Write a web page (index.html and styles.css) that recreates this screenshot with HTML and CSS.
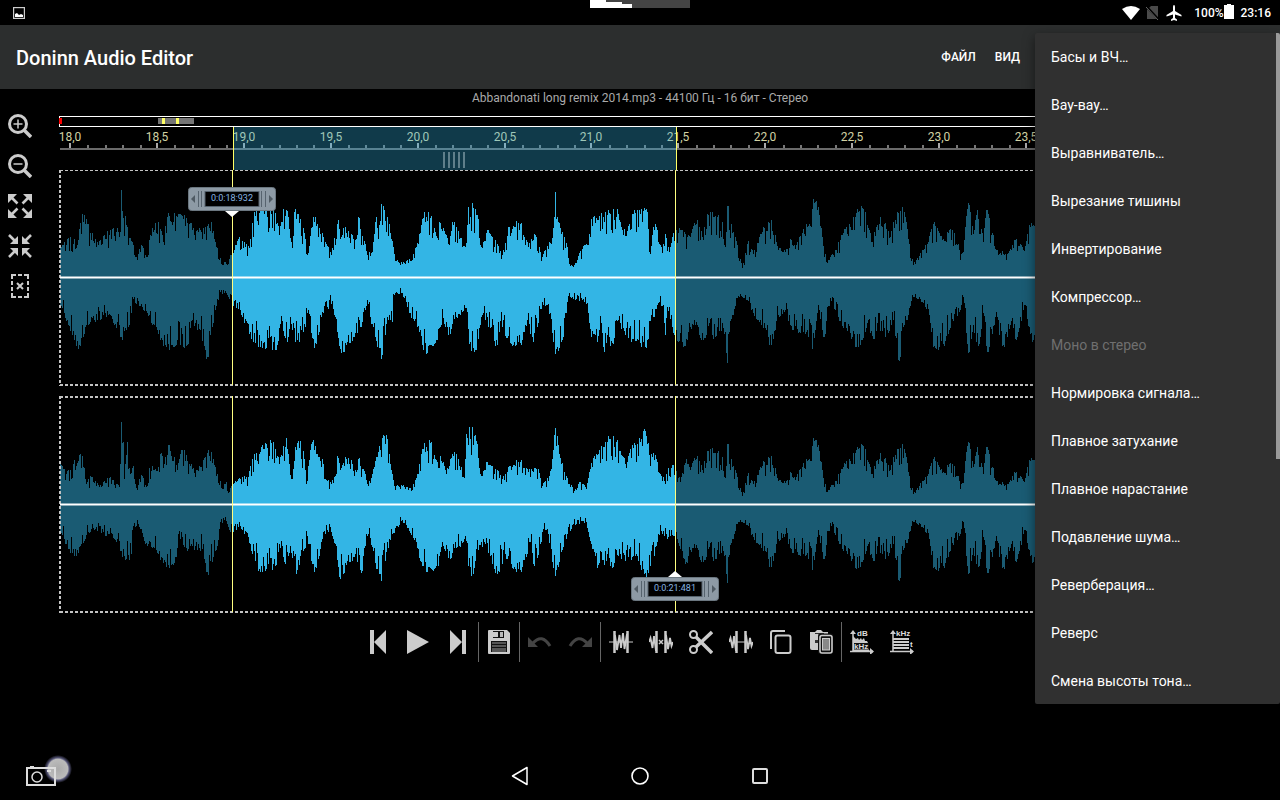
FILE: index.html
```html
<!DOCTYPE html>
<html lang="ru">
<head>
<meta charset="utf-8">
<meta name="viewport" content="width=device-width, initial-scale=1">
<title>Doninn Audio Editor</title>
<link rel="stylesheet" href="styles.css">
</head>
<body>
<div class="statusbar">
  <svg class="icon-note" width="12" height="12" viewBox="0 0 12 12"><rect x=".6" y=".6" width="10.8" height="10.8" fill="none" stroke="#ccc" stroke-width="1.2"/><path d="M2 10V7l2-1 2 2 2-1 2 1v2z" fill="#fff"/></svg>
  <svg class="cutout" width="100" height="8" viewBox="0 0 100 8"><path d="M0 0h100v8H0z" fill="#444"/><path d="M0 0h16v2h16v2h10v4H0z" fill="#fff"/></svg>
  <div class="status-icons">
    <svg width="18" height="14" viewBox="0 0 18 14"><path d="M9 14 0 3Q9-3 18 3z" fill="#fff"/></svg>
    <svg width="14" height="16" viewBox="0 0 14 16"><path d="M5 1h7v13H1V5z" fill="#4a4a4a"/><path d="M0 1l13 14" stroke="#000" stroke-width="2.500"/><path d="M0 2l12 13" stroke="#666" stroke-width="1"/></svg>
    <svg width="16" height="16" viewBox="0 0 16 16"><path d="M8 0q1 0 1 2v4l6.500 4v1.500L9 9.500V13l2 1.500V16l-3-1-3 1v-1.500L7 13V9.500L.5 11.500V10L7 6V2q0-2 1-2z" fill="#fff"/></svg>
  </div>
  <span class="battery">100%<svg width="10" height="15" viewBox="0 0 10 15"><path d="M3 0h4v1h3v14H0V1h3z" fill="#fff"/></svg></span>
  <time class="clock">23:16</time>
</div>

<header class="appbar">
  <h1 class="app-title">Doninn Audio Editor</h1>
  <button class="appbar-action">ФАЙЛ</button>
  <button class="appbar-action">ВИД</button>
</header>

<main class="workspace">
  <p class="file-info">Abbandonati long remix 2014.mp3 - 44100 Гц - 16 бит - Стерео</p>
  <div class="editor">
    <div class="zoom-tools">
      <button class="tool" aria-label="Увеличить"><svg width="24" height="24" viewBox="0 0 24 24"><circle cx="10" cy="10" r="8.500" fill="none" stroke="#ccc" stroke-width="3"/><path d="M16 16l7 7" stroke="#ccc" stroke-width="3.500"/><path d="M10 5.500v9M5.500 10h9" stroke="#ccc" stroke-width="1.500"/></svg></button>
      <button class="tool" aria-label="Уменьшить"><svg width="24" height="24" viewBox="0 0 24 24"><circle cx="10" cy="10" r="8.500" fill="none" stroke="#ccc" stroke-width="3"/><path d="M16 16l7 7" stroke="#ccc" stroke-width="3.500"/><path d="M5.500 10h9" stroke="#ccc" stroke-width="1.500"/></svg></button>
      <button class="tool" aria-label="Показать всё"><svg width="24" height="24" viewBox="0 0 24 24" fill="#ccc" stroke="#ccc"><path stroke="none" d="M0 0h9L0 9zM24 0v9L15 0zM0 24v-9l9 9zM24 24h-9l9-9z"/><path stroke-width="2.600" d="M3 3l6.500 6.500M21 3l-6.500 6.500M3 21l6.500-6.500M21 21l-6.500-6.500"/></svg></button>
      <button class="tool" aria-label="По выделению"><svg width="24" height="24" viewBox="0 0 24 24" fill="#ccc" stroke="#ccc"><path stroke="none" d="M10 10H2l8-8zM14 10V2l8 8zM10 14v8l-8-8zM14 14h8l-8 8z"/><path stroke-width="2.600" d="M1 1l7 7M23 1l-7 7M1 23l7-7M23 23l-7-7"/></svg></button>
      <button class="tool" aria-label="Снять выделение"><svg width="24" height="24" viewBox="0 0 24 24" fill="none" stroke="#ccc" stroke-width="2"><path d="M4 5V1h4M16 1h4v4M20 19v4h-4M8 23H4v-4M10 1h4M10 23h4M4 7v4M4 13v4M20 7v4M20 13v4"/><path d="M9 9l6 6M15 9l-6 6"/></svg></button>
    </div>
    <div class="tracks">
      <svg class="overview" width="100%" height="11"><path d="M0 .5h3000M0 10.500h3000M.5 0v11" stroke="#fff" fill="none"/><path d="M0 2h3v6H0z" fill="red"/><path d="M99 2h36v6H99z" fill="#757575"/><path d="M103 2h3v6h-3zM117 2h3v6h-3z" fill="#ffff66"/></svg>
      <svg class="ruler" id="ruler" width="100%" height="43"></svg>
      <div class="lane lane-left">
        <svg class="wave" id="wave-left" width="100%" height="216"></svg>
        <div class="marker marker-start"><svg width="88" height="30" viewBox="0 0 88 30"><use href="#marker-body"/><path d="M37 24h14l-7 6z" fill="#fff"/></svg><span class="marker-time">0:0:18:932</span></div>
      </div>
      <div class="lane lane-right">
        <svg class="wave" id="wave-right" width="100%" height="217"></svg>
        <div class="marker marker-end"><svg width="88" height="30" viewBox="0 0 88 30"><g transform="translate(0 6)"><use href="#marker-body"/></g><path d="M37 6h14l-7-6z" fill="#fff"/></svg><span class="marker-time">0:0:21:481</span></div>
      </div>
    </div>
  </div>

  <div class="toolbar">
    <button class="tool" aria-label="В начало"><svg width="24" height="24" viewBox="0 0 24 24" fill="#ccc"><path d="M4 0h4v24H4zM20 0v24L8 12z"/></svg></button>
    <button class="tool" aria-label="Воспроизвести"><svg width="24" height="24" viewBox="0 0 24 24" fill="#ccc"><path d="M1 0l22 12L1 24z"/></svg></button>
    <button class="tool" aria-label="В конец"><svg width="24" height="24" viewBox="0 0 24 24" fill="#ccc"><path d="M16 0h4v24h-4zM4 0l12 12L4 24z"/></svg></button>
    <span class="divider"></span>
    <button class="tool" aria-label="Сохранить"><svg width="24" height="24" viewBox="0 0 24 24"><path d="M2 0h18l3 3v20q0 1-1 1H2q-1 0-1-1V1q0-1 1-1z" fill="#ccc"/><path d="M6 1h11v7H6zM4 11h16v11H4z" fill="#111"/><path d="M6 2h5v5H6z" fill="#ccc"/><path d="M13 2h3v5h-3z" fill="#bbb"/><path d="M5 13h14M5 16h14M5 19h14M5 21h14" stroke="#999" stroke-width="1.200"/></svg></button>
    <span class="divider"></span>
    <button class="tool" aria-label="Отменить" disabled><svg width="24" height="24" viewBox="0 0 24 24"><path d="M0 7v10h10z" fill="#444"/><path d="M5 13q9-10 17 3" fill="none" stroke="#444" stroke-width="3"/></svg></button>
    <button class="tool" aria-label="Повторить" disabled><svg width="24" height="24" viewBox="0 0 24 24"><path d="M24 7v10H14z" fill="#444"/><path d="M19 13q-9-10-17 3" fill="none" stroke="#444" stroke-width="3"/></svg></button>
    <span class="divider"></span>
    <button class="tool" aria-label="Выделить всё"><svg width="24" height="24" viewBox="0 0 24 24" fill="none" stroke="#ccc"><path d="M0 12h24" stroke-width="1"/><path d="M5.500 1v22M18.500 1v22" stroke-width="2.500"/><path d="M6 5l2 15 2.500-15L12 18l2-15 1.500 16L18 4" stroke-width="1.800"/></svg></button>
    <button class="tool" aria-label="Удалить"><svg width="24" height="24" viewBox="0 0 24 24" fill="none" stroke="#ccc"><path d="M7.500 1v22M16.500 1v22" stroke-width="2.500"/><path d="M0 12l1.500-4 2 10L5 6l2 15M17 5l2 14 2-11 1.500 8L24 12" stroke-width="1.800"/><path d="M10 10l4 4M14 10l-4 4" stroke-width="1.500"/></svg></button>
    <button class="tool" aria-label="Вырезать"><svg width="24" height="24" viewBox="0 0 24 24" fill="none" stroke="#ccc"><circle cx="4.500" cy="4.500" r="3.500" stroke-width="2"/><circle cx="4.500" cy="19.500" r="3.500" stroke-width="2"/><path d="M7 7l16 16M7 17L23 2" stroke-width="3.500"/></svg></button>
    <button class="tool" aria-label="Обрезать"><svg width="24" height="24" viewBox="0 0 24 24" fill="none" stroke="#ccc"><path d="M7.500 1v22M16.500 1v22" stroke-width="2.500"/><path d="M0 12l1.500-4 2 10L5 6l2 15M17 5l2 14 2-11 1.500 8L24 12" stroke-width="1.800"/><path d="M8 12h8"/></svg></button>
    <button class="tool" aria-label="Копировать"><svg width="24" height="24" viewBox="0 0 24 24" fill="none" stroke="#ccc" stroke-width="2"><path d="M2 19V3q0-2 2-2h12"/><rect x="6.500" y="5.500" width="15" height="17.500" rx="2"/></svg></button>
    <button class="tool" aria-label="Вставить"><svg width="24" height="24" viewBox="0 0 24 24"><path d="M1 2h5l2-2h4l2 2h5v18H3q-2 0-2-2z" fill="#ccc"/><path d="M6 3h9v1H6zM6 10h4v3H6z" fill="#333"/><rect x="9" y="3.500" width="15" height="20.500" rx="2" fill="#111"/><rect x="11" y="5.500" width="12" height="17.500" rx="2" fill="#111" stroke="#ccc" stroke-width="1.600"/><rect x="13.500" y="8.500" width="7" height="11.500" fill="#888" stroke="#ccc"/></svg></button>
    <span class="divider"></span>
    <button class="tool" aria-label="Спектр"><svg width="24" height="24" viewBox="0 0 24 24"><path d="M3 22V3M0 21.500h23" stroke="#ccc" stroke-width="1.500"/><path d="M0 4l3-4 3 4zM20 18l4 3.500-4 3.500z" fill="#ccc"/><path d="M3 6l3 3 2-1 1 2 2-2 1 2 2-2 1 3h2l2 4v5l2 2H3z" fill="#ccc"/><rect x="4" y="13" width="15" height="6.500" fill="#111"/><text class="glyph" x="7" y="6">dB</text><text class="glyph" x="4" y="19">kHz</text></svg></button>
    <button class="tool" aria-label="Спектрограмма"><svg width="24" height="24" viewBox="0 0 24 24"><path d="M3 22V3M0 21.500h23" stroke="#ccc" stroke-width="1.500"/><path d="M0 4l3-4 3 4zM20 18l4 3.500-4 3.500z" fill="#ccc"/><path d="M3 9h16M3 12h16M3 15h16M3 18h16" stroke="#ccc" stroke-width="2"/><text class="glyph" x="6" y="6">kHz</text><text class="glyph" x="20" y="17">t</text></svg></button>
  </div>
</main>

<nav class="navbar">
  <button class="nav-shot" aria-label="Снимок экрана"><svg width="60" height="48" viewBox="0 0 60 48"><defs><radialGradient id="glow"><stop offset="0" stop-color="#aaa"/><stop offset=".7" stop-color="#bbb"/><stop offset=".8" stop-color="#557"/><stop offset="1" stop-color="#000"/></radialGradient></defs><circle cx="46" cy="17" r="14" fill="url(#glow)"/><path d="M15 16v17h28V16z" fill="none" stroke="#ddd" stroke-width="2"/><path d="M18 14h4v2h-4zM35 18h4v2h-4z" fill="#ddd"/><circle cx="25" cy="25" r="5" fill="none" stroke="#ddd" stroke-width="1.500"/></svg></button>
  <button class="nav-key" aria-label="Назад"><svg width="18" height="20" viewBox="0 0 18 20"><path d="M1.500 10L16 1.500v17z" fill="none" stroke="#fff" stroke-width="1.500" stroke-linejoin="round"/></svg></button>
  <button class="nav-key" aria-label="Домой"><svg width="18" height="20" viewBox="0 0 18 20"><circle cx="9" cy="10" r="8" fill="none" stroke="#fff" stroke-width="1.600"/></svg></button>
  <button class="nav-key" aria-label="Недавние"><svg width="18" height="20" viewBox="0 0 18 20"><rect x="2" y="3" width="14" height="14" rx="1" fill="none" stroke="#ddd" stroke-width="2"/></svg></button>
</nav>

<div class="menu" role="menu">
  <button class="menu-item" role="menuitem">Басы и ВЧ…</button>
  <button class="menu-item" role="menuitem">Вау-вау…</button>
  <button class="menu-item" role="menuitem">Выравниватель…</button>
  <button class="menu-item" role="menuitem">Вырезание тишины</button>
  <button class="menu-item" role="menuitem">Инвертирование</button>
  <button class="menu-item" role="menuitem">Компрессор…</button>
  <button class="menu-item" role="menuitem" disabled>Моно в стерео</button>
  <button class="menu-item" role="menuitem">Нормировка сигнала…</button>
  <button class="menu-item" role="menuitem">Плавное затухание</button>
  <button class="menu-item" role="menuitem">Плавное нарастание</button>
  <button class="menu-item" role="menuitem">Подавление шума…</button>
  <button class="menu-item" role="menuitem">Реверберация…</button>
  <button class="menu-item" role="menuitem">Реверс</button>
  <button class="menu-item" role="menuitem">Смена высоты тона…</button>
  <span class="menu-scroll"></span>
</div>

<svg class="defs" width="0" height="0"><defs><g id="marker-body"><rect x=".5" y=".5" width="87" height="23" rx="3" fill="#8d9aa5" stroke="#6b7780"/><rect x="17" y="4.500" width="54" height="15" fill="#000" stroke="#56636e"/><path d="M10.500 4v16M13.500 4v16M73.500 4v16M77.500 4v16" stroke="#56636e" fill="none"/><path d="M7 8v8l-4-4zM81 8v8l4-4z" fill="#4f5a63"/></g></defs></svg>
<script src="waves.js"></script>
</body>
</html>
```

FILE: styles.css
```css
* { box-sizing: border-box; }
body {
  margin: 0;
  min-height: 100vh;
  display: flex;
  flex-direction: column;
  position: relative;
  background: #000;
  color: #fff;
  font-family: Roboto, "Noto Sans", sans-serif;
  font-size: 14px;
  overflow-x: hidden;
}
button {
  border: 0;
  padding: 0;
  margin: 0;
  background: none;
  color: inherit;
  font: inherit;
}
svg { display: block; }
.defs { position: absolute; }

.statusbar {
  position: relative;
  height: 25px;
  padding: 0 9px 0 13px;
  display: flex;
  align-items: center;
  font-size: 12px;
  font-weight: 500;
}
.cutout { position: absolute; top: 0; left: calc(50% - 50px); }
.status-icons {
  margin-left: auto;
  display: flex;
  align-items: center;
  gap: 6px;
}
.battery { display: flex; align-items: center; margin-left: 12px; }
.battery svg { margin-bottom: 2px; }
.clock { margin-left: 7px; }

.appbar {
  display: flex;
  align-items: center;
  gap: 19px;
  height: 64px;
  padding: 0 260px 0 16px;
  background: #2c2e2e;
}
.app-title {
  flex: 1;
  margin: 0;
  padding-top: 2px;
  font-size: 20px;
  font-weight: 500;
}
.appbar-action { font-size: 12px; font-weight: 500; }

.workspace { flex: 1; }
.file-info {
  margin: 0;
  padding-top: 2px;
  height: 27px;
  line-height: 15px;
  text-align: center;
  font-size: 12px;
  color: #aaa;
}
.editor { display: grid; grid-template-columns: 59px 1fr; }
.zoom-tools { width: 40px; margin-top: -10px; }
.tool {
  width: 40px;
  height: 40px;
  display: flex;
  align-items: center;
  justify-content: center;
}
.tracks { min-width: 0; overflow: hidden; }
.ruler text { font-size: 12px; fill: #d2d2a4; text-anchor: middle; }
.lane { position: relative; }
.lane-right { margin-top: 10px; }
.marker { position: absolute; width: 88px; height: 30px; }
.marker-start { left: 129px; top: 17px; }
.marker-end { left: 572px; bottom: 12px; }
.marker-time {
  position: absolute;
  inset: 5px 0 auto;
  line-height: 12px;
  text-align: center;
  font-size: 9px;
  color: #86b4e0;
}
.marker-end .marker-time { top: 11px; }

.toolbar { display: flex; justify-content: center; margin-top: 9px; }
.divider { width: 1px; height: 40px; background: #666; }
.glyph { font: bold 8px "Liberation Sans", sans-serif; fill: #ddd; }

.navbar {
  position: relative;
  height: 48px;
  display: flex;
  justify-content: center;
  gap: 72px;
}
.nav-key { width: 48px; height: 48px; display: flex; align-items: center; justify-content: center; }
.nav-shot { position: absolute; left: 12px; top: 0; }

.menu {
  position: absolute;
  top: 33px;
  right: 0;
  width: 245px;
  max-height: calc(100vh - 129px);
  overflow: hidden;
  background: #303030;
  border-radius: 2px;
  box-shadow: 0 4px 12px rgba(0, 0, 0, .5);
}
.menu-item {
  display: block;
  width: 100%;
  height: 48px;
  padding: 0 16px;
  text-align: left;
  font-size: 14px;
}
.menu-item:disabled { color: #6f6f6f; }
.menu-scroll {
  position: absolute;
  top: 0;
  right: 0;
  width: 4px;
  height: 426px;
  background: #999;
}
```

FILE: waves.js
```js
const ORIGIN = 59;
const SEL_START = 232;
const SEL_END = 675;
const LENGTH = 1240;

// Envelopes: x, height pairs.
const leftUp = [60,27,70,40,77,32,82,63,90,44,98,32,110,47,118,45,120,45,121,87,122,66,127,50,132,35,136,20,141,32,146,20,150,42,158,55,163,35,167,60,183,58,198,45,211,55,216,30,222,12,232,22,238,38,249,29,254,65,263,66,275,64,279,42,283,68,287,66,292,29,294,65,300,58,308,24,313,60,323,40,331,22,338,57,343,49,353,38,358,60,367,22,372,25,376,60,378,38,381,73,387,60,390,44,396,16,402,13,409,18,415,29,420,44,423,59,428,65,437,39,439,55,449,32,452,55,460,39,465,30,468,70,473,69,478,58,482,29,488,47,502,22,509,50,520,53,528,30,535,42,542,20,552,39,554,60,555,85,556,58,560,49,567,30,569,13,573,10,582,28,588,32,591,58,603,60,610,63,618,63,623,42,633,63,647,65,649,25,653,50,656,50,662,24,665,43,670,30,675,48,690,40,697,57,702,40,708,62,717,60,722,55,725,30,727,71,732,44,737,32,742,9,748,36,753,23,762,45,771,57,778,27,785,25,791,37,795,28,802,44,807,50,811,50,813,78,819,62,822,40,827,14,835,27,843,44,850,50,858,65,863,68,872,35,880,60,890,40,897,65,904,65,908,38,913,12,923,27,928,35,933,53,942,37,952,47,961,23,963,25,966,61,969,72,973,43,977,67,983,35,986,67,992,44,1000,24,1008,24,1015,37,1023,27,1029,52,1240,46];
const leftDown = [60,26,67,43,74,63,79,68,85,50,92,41,100,43,110,38,121,60,128,50,133,22,143,33,147,36,157,53,166,70,177,63,187,68,192,43,200,53,207,80,213,46,217,22,225,14,232,26,240,33,253,65,263,66,277,68,280,47,287,65,290,40,295,65,303,55,308,33,314,71,323,36,332,24,341,76,347,65,360,50,367,23,370,40,377,70,382,78,387,40,392,45,393,17,402,16,410,36,420,53,423,73,437,63,443,41,448,58,458,37,465,31,469,67,475,73,482,38,497,68,500,44,510,66,522,63,527,43,533,65,542,25,550,36,555,77,563,60,567,25,570,20,587,26,591,60,597,65,601,46,603,70,612,66,618,43,625,58,638,63,645,70,653,40,658,26,663,28,665,58,667,30,672,50,683,70,690,50,694,43,703,63,711,41,712,58,723,51,725,55,727,86,729,55,732,38,740,17,748,24,753,36,760,43,771,68,778,38,785,33,793,53,807,53,812,72,817,36,824,60,830,21,840,44,852,60,858,70,867,46,873,62,877,46,885,60,893,43,899,84,903,50,908,38,912,18,920,22,928,32,933,70,943,67,952,42,960,33,963,20,968,76,973,48,978,69,983,36,987,75,995,40,1003,68,1011,44,1016,63,1024,28,1029,50,1033,63,1240,50];
const rightUp = [60,38,66,30,73,40,82,48,86,20,91,27,99,17,109,26,119,17,120,40,121,82,123,62,124,25,127,62,130,30,133,38,136,16,141,29,146,17,149,36,155,35,160,50,164,40,169,59,177,34,182,54,190,38,198,33,204,46,208,54,213,45,217,30,222,15,226,22,229,12,232,20,240,25,248,27,252,45,260,52,266,60,270,64,275,55,279,40,283,58,286,66,289,40,291,25,295,57,300,63,304,45,306,20,308,38,312,62,318,47,322,45,325,25,331,20,335,28,337,48,345,47,352,40,358,45,363,35,368,18,372,30,377,47,382,66,386,69,390,40,394,18,402,18,410,16,417,30,423,55,429,64,435,45,440,48,446,30,452,50,458,45,464,26,466,70,469,77,474,68,477,60,482,28,487,42,495,35,502,25,510,38,520,42,528,32,538,35,542,18,549,28,552,45,555,76,559,50,564,32,569,20,574,13,580,22,586,15,590,35,594,48,604,57,609,65,616,62,625,40,630,55,637,60,641,65,644,75,647,60,651,50,656,45,662,23,668,36,675,36,680,22,686,45].concat(tail(leftUp, .85));
const rightDown = [60,26,66,40,74,52,80,42,88,28,95,25,105,32,112,30,116,38,121,47,125,56,131,50,133,22,138,20,145,40,150,38,158,50,164,56,169,64,175,53,180,35,188,45,195,42,202,45,207,68,212,58,217,42,219,25,225,13,230,28,240,22,248,33,252,50,259,65,268,60,275,62,279,40,285,60,290,42,296,70,300,52,304,45,307,32,314,68,320,45,325,30,330,23,335,40,340,75,347,57,355,50,362,67,366,30,370,34,376,65,381,77,386,48,392,30,402,16,408,24,416,38,422,62,430,64,438,62,442,38,450,55,457,43,464,35,468,62,473,70,476,45,484,38,492,60,498,67,505,50,515,65,522,63,530,38,534,62,540,40,543,25,548,30,555,72,561,48,567,30,573,20,586,18,592,45,597,64,603,56,610,62,618,52,628,53,636,50,644,70,650,62,656,42,661,27,668,33,676,28,680,45,686,58].concat(tail(leftDown, .92));

function tail(points, scale) {
  const out = [];
  for (let i = 0; i < points.length; i += 2) {
    if (points[i] >= 690) out.push(points[i], points[i + 1] * scale);
  }
  return out;
}

function heights(points, seed) {
  let s = seed, k = 0;
  const out = [];
  for (let x = 60; x < LENGTH; x++) {
    while (k < points.length - 4 && points[k + 2] < x) k += 2;
    const t = (x - points[k]) / (points[k + 2] - points[k]);
    const h = points[k + 1] + (points[k + 3] - points[k + 1]) * t;
    s = (s * 16807) % 2147483647;
    const r = s / 2147483647;
    const atPoint = points[k + 2] === x;
    out.push(Math.round(atPoint ? h : h * (1.08 - .42 * r * r)));
  }
  return out;
}

function bars(up, down, mid, from, to) {
  let d = "";
  for (let x = from; x < to; x++) {
    d += `M${x - ORIGIN} ${mid - up[x - 60]}h1V${mid + down[x - 60]}h-1z`;
  }
  return d;
}

function drawLane(id, up, down, height, topWidth, mid) {
  const a = heights(up, 77), b = heights(down, 1234);
  const dim = bars(a, b, mid, 60, SEL_START) + bars(a, b, mid, SEL_END, LENGTH);
  const bright = bars(a, b, mid, SEL_START, SEL_END);
  const s = SEL_START - ORIGIN + .5, e = SEL_END - ORIGIN + .5;
  document.getElementById(id).innerHTML = `
    <g shape-rendering="crispEdges"><path d="${dim}" fill="#1a5b73"/><path d="${bright}" fill="#33b5e5"/></g>
    <g stroke="#c4c4c4" stroke-dasharray="3 2">
      <path d="M1 ${topWidth / 2}H${LENGTH}" stroke-width="${topWidth}"/>
      <path d="M1 ${height - 1}H${LENGTH}" stroke-width="2"/>
      <path d="M1 0V${height}" stroke-width="2"/>
    </g>
    <path d="M1 ${mid + .5}H${LENGTH}" stroke="#fff" stroke-opacity=".5" stroke-width="3"/>
    <path d="M1 ${mid + .5}H${LENGTH}" stroke="#fff"/>
    <path d="M${s} 0V${height - 1}M${e} 0V${height - 1}" stroke="#ffff80"/>`;
}

function drawRuler() {
  let ticks = "", majors = "", labels = "";
  for (let i = 0; i < 68; i++) {
    const x = Math.round(11 + i * 17.38);
    if (i % 5) ticks += `M${x} 18h2v4h-2z`;
    else {
      majors += `M${x - 1} 16h2v6h-2z`;
      if (i <= 55) labels += `<text x="${x}" y="14">${(18 + i / 10).toFixed(1).replace(".", ",")}</text>`;
    }
  }
  document.getElementById("ruler").innerHTML = `
    ${labels}<path d="${ticks}" fill="#777"/><path d="${majors}" fill="#aaa"/>
    <path d="M1 21h${LENGTH}v2H1z" fill="#6a6a6a"/>
    <path d="M175 0h442v43H175z" fill="#33b5e5" fill-opacity=".32"/>
    <path d="M385 25v16M390 25v16M395 25v16M400 25v16M405 25v16" stroke="#5f7f8b" stroke-width="2"/>
    <path d="M174.500 0v43M617.500 0v43" stroke="#ffff66"/>`;
}

drawRuler();
drawLane("wave-left", leftUp, leftDown, 216, 1, 107);
drawLane("wave-right", rightUp, rightDown, 217, 2, 108);
```
